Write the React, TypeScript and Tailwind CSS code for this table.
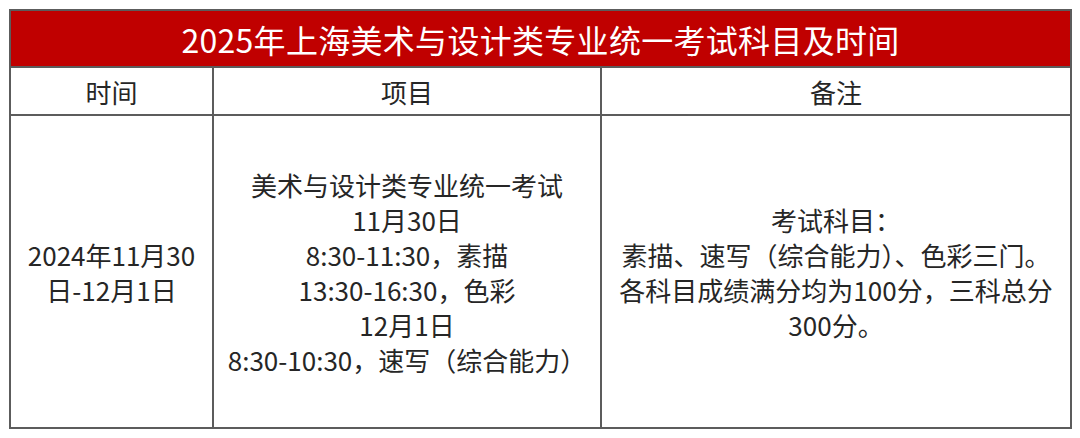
export default function App() {
  const cell = "flex items-center justify-center text-center";

  return (
    <main
      className="w-[1080px] h-[438px] bg-white pt-[9px] pl-[9px]"
      style={{ fontFamily: '"Noto Sans CJK SC", "Noto Sans", sans-serif' }}
    >
      <div className="w-[1063px] border-2 border-[#5c5c5c] text-[#262626]">
        {/* title */}
        <div className="h-[57px] bg-[#c00000] flex items-center justify-center border-b-2 border-[#5c5c5c]">
          <h1 className="text-[32px] leading-none text-white tracking-[0.3px]">
            2025年上海美术与设计类专业统一考试科目及时间
          </h1>
        </div>

        {/* header row */}
        <div className="grid grid-cols-[201px_388px_1fr] h-[48px] border-b-2 border-[#5c5c5c] text-[26px]">
          <div className={cell}>时间</div>
          <div className={`${cell} border-l-2 border-[#5c5c5c]`}>项目</div>
          <div className={`${cell} border-l-2 border-[#5c5c5c]`}>备注</div>
        </div>

        {/* body */}
        <div className="grid grid-cols-[201px_388px_1fr] h-[311px] text-[26px] leading-[35px]">
          <div className={cell}>
            <p>
              2024年11月30
              <br />
              日-12月1日
            </p>
          </div>
          <div className={`${cell} border-l-2 border-[#5c5c5c]`}>
            <div>
              <p>美术与设计类专业统一考试</p>
              <p>11月30日</p>
              <p>8:30-11:30，素描</p>
              <p>13:30-16:30，色彩</p>
              <p>12月1日</p>
              <p>8:30-10:30，速写（综合能力）</p>
            </div>
          </div>
          <div className={`${cell} border-l-2 border-[#5c5c5c]`}>
            <div>
              <p>考试科目：</p>
              <p>素描、速写（综合能力）、色彩三门。</p>
              <p>各科目成绩满分均为100分，三科总分</p>
              <p>300分。</p>
            </div>
          </div>
        </div>
      </div>
    </main>
  );
}
